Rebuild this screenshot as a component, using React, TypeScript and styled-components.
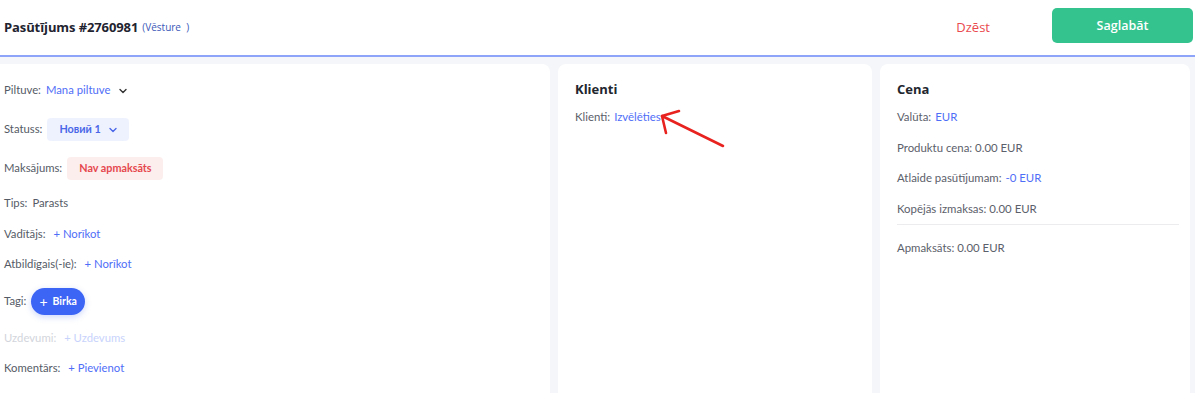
import { FC } from "react";
import styled, { createGlobalStyle } from "styled-components";

const GlobalStyle = createGlobalStyle`
  html, body {
    margin: 0;
    padding: 0;
    background: #ffffff;
    font-family: "Lato", "Noto Sans", sans-serif;
    color: #555b66;
  }
  * { box-sizing: border-box; }
`

const Page = styled.div`
  width: 1195px;
  height: 393px;
  display: flex;
  flex-direction: column;
  overflow: hidden;
  background: #ffffff;
`

const Header = styled.header`
  height: 57px;
  flex-shrink: 0;
  display: flex;
  align-items: center;
  padding: 0 2px 2px 4px;
  border-bottom: 2px solid #8ea4f8;
`

const Title = styled.h1`
  margin: 0;
  font-family: "Open Sans", "Noto Sans", sans-serif;
  font-size: 13px;
  font-weight: 700;
  color: #1f2430;
  letter-spacing: -0.1px;
`

const History = styled.a`
  margin-left: 4px;
  font-family: "Open Sans", sans-serif;
  font-size: 10px;
  color: #3a57b8;
  white-space: pre;
`

const Spacer = styled.div`
  flex: 1;
`

const DeleteButton = styled.button`
  border: none;
  background: none;
  font-family: "Open Sans", sans-serif;
  font-size: 13px;
  color: #ea4a4f;
  margin-right: 62px;
  padding: 0;
`

const SaveButton = styled.button`
  width: 141px;
  height: 35px;
  border: none;
  border-radius: 5px;
  background: #34c38f;
  color: #ffffff;
  font-family: "Open Sans", sans-serif;
  font-size: 12.5px;
  font-weight: 600;
  margin-top: -2px;
`

const Body = styled.div`
  flex: 1;
  display: flex;
  gap: 8px;
  padding: 7px 5px 0 0;
  background: #f5f6f9;
`

const Panel = styled.section<{ $width: number }>`
  width: ${p => p.$width}px;
  flex-shrink: 0;
  background: #ffffff;
  border-radius: 8px 8px 0 0;
  position: relative;
`

const LeftPanel = styled(Panel)`
  padding: 7px 0 0 4px;
  border-radius: 0 8px 0 0;
`

const Card = styled(Panel)`
  padding: 17px 17px 0 17px;
`

const Row = styled.div<{ $faded?: boolean }>`
  display: flex;
  align-items: center;
  gap: 5px;
  padding: 8px 0;
  font-size: 11.3px;
  line-height: 14.5px;
  color: ${p => (p.$faded ? "#d2d5dc" : "#555b66")};
`

const Label = styled.span``

const Link = styled.a<{ $faded?: boolean }>`
  color: ${p => (p.$faded ? "#c8d3fc" : "#4f6ef7")};
  text-decoration: none;
`

const Dropdown = styled.span`
  height: 23px;
  display: inline-flex;
  align-items: center;
  gap: 8px;
  color: #4f6ef7;
`

const Badge = styled.span<{ $tone: "blue" | "red" }>`
  height: 23px;
  display: inline-flex;
  align-items: center;
  gap: 7px;
  padding: 0 11px 0 12px;
  border-radius: 4px;
  font-size: 10.8px;
  font-weight: 700;
  background: ${p => (p.$tone === "blue" ? "#eef2ff" : "#fdeeee")};
  color: ${p => (p.$tone === "blue" ? "#4a67e8" : "#e5484d")};
`

const Pill = styled.button`
  height: 27px;
  display: inline-flex;
  align-items: center;
  gap: 5px;
  padding: 0 8px 0 8px;
  border: none;
  border-radius: 14px;
  background: #3c64f5;
  color: #ffffff;
  font-family: "Lato", sans-serif;
  font-size: 10.5px;
  font-weight: 700;
  box-shadow: 0 2px 6px rgba(60, 100, 245, 0.25);
`

const PlusSign = styled.span`
  font-size: 14px;
  font-weight: 400;
`

const CardTitle = styled.h2`
  margin: 0 0 5px;
  font-family: "Open Sans", "Noto Sans", sans-serif;
  font-size: 13px;
  font-weight: 700;
  color: #22262e;
  line-height: 16px;
`

const InfoRow = styled.div`
  font-size: 11.4px;
  color: #5b606a;
  padding: 8px 0;
  line-height: 14.5px;
  display: flex;
  gap: 4px;
`

const Divider = styled.hr`
  border: none;
  border-top: 1px solid #ececef;
  margin: 0 -6px 8px 0;
`

const Arrow = styled.svg`
  position: absolute;
  left: 0;
  top: 0;
  pointer-events: none;
`

const Chevron: FC<{ color: string }> = ({ color }) => (
  <svg width="10" height="10" viewBox="0 0 10 10">
    <path d="M2 3.5 L5 6.5 L8 3.5" fill="none" stroke={color} strokeWidth="1.4" strokeLinecap="round" strokeLinejoin="round" />
  </svg>
)

const App: FC = () => {
  return (
    <Page>
      <GlobalStyle />
      <Header>
        <Title>Pasūtījums #2760981</Title>
        <History>(Vēsture  )</History>
        <Spacer />
        <DeleteButton>Dzēst</DeleteButton>
        <SaveButton>Saglabāt</SaveButton>
      </Header>
      <Body>
        <LeftPanel $width={550}>
          <Row>
            <Label>Piltuve:</Label>
            <Dropdown>
              Mana piltuve
              <Chevron color="#333" />
            </Dropdown>
          </Row>
          <Row>
            <Label>Statuss:</Label>
            <Badge $tone="blue">
              Новий 1
              <Chevron color="#4a67e8" />
            </Badge>
          </Row>
          <Row>
            <Label>Maksājums:</Label>
            <Badge $tone="red">Nav apmaksāts</Badge>
          </Row>
          <Row>
            <Label>Tips:</Label>
            <span>Parasts</span>
          </Row>
          <Row>
            <Label>Vadītājs:</Label>
            <Link>&nbsp;+ Norīkot</Link>
          </Row>
          <Row>
            <Label>Atbildīgais(-ie):</Label>
            <Link>&nbsp;+ Norīkot</Link>
          </Row>
          <Row>
            <Label>Tagi:</Label>
            <Pill>
              <PlusSign>+</PlusSign>
              Birka
            </Pill>
          </Row>
          <Row $faded>
            <Label>Uzdevumi:</Label>
            <Link $faded>&nbsp;+ Uzdevums</Link>
          </Row>
          <Row>
            <Label>Komentārs:</Label>
            <Link>&nbsp;+ Pievienot</Link>
          </Row>
        </LeftPanel>
        <Card $width={314}>
          <CardTitle>Klienti</CardTitle>
          <InfoRow>
            Klienti: <Link>Izvēlēties</Link>
          </InfoRow>
          <Arrow width="200" height="100" viewBox="0 0 200 100">
            <g fill="none" stroke="#e8231f" strokeWidth="2.6" strokeLinecap="round" strokeLinejoin="round">
              <path d="M165 82 L104 52" />
              <path d="M121 47 L104 52 L108 69" />
            </g>
          </Arrow>
        </Card>
        <Card $width={310}>
          <CardTitle>Cena</CardTitle>
          <InfoRow>
            Valūta: <Link>EUR</Link>
          </InfoRow>
          <InfoRow>Produktu cena: 0.00 EUR</InfoRow>
          <InfoRow>
            Atlaide pasūtījumam: <Link>-0 EUR</Link>
          </InfoRow>
          <InfoRow>Kopējās izmaksas: 0.00 EUR</InfoRow>
          <Divider />
          <InfoRow>Apmaksāts: 0.00 EUR</InfoRow>
        </Card>
      </Body>
    </Page>
  )
}

export default App
